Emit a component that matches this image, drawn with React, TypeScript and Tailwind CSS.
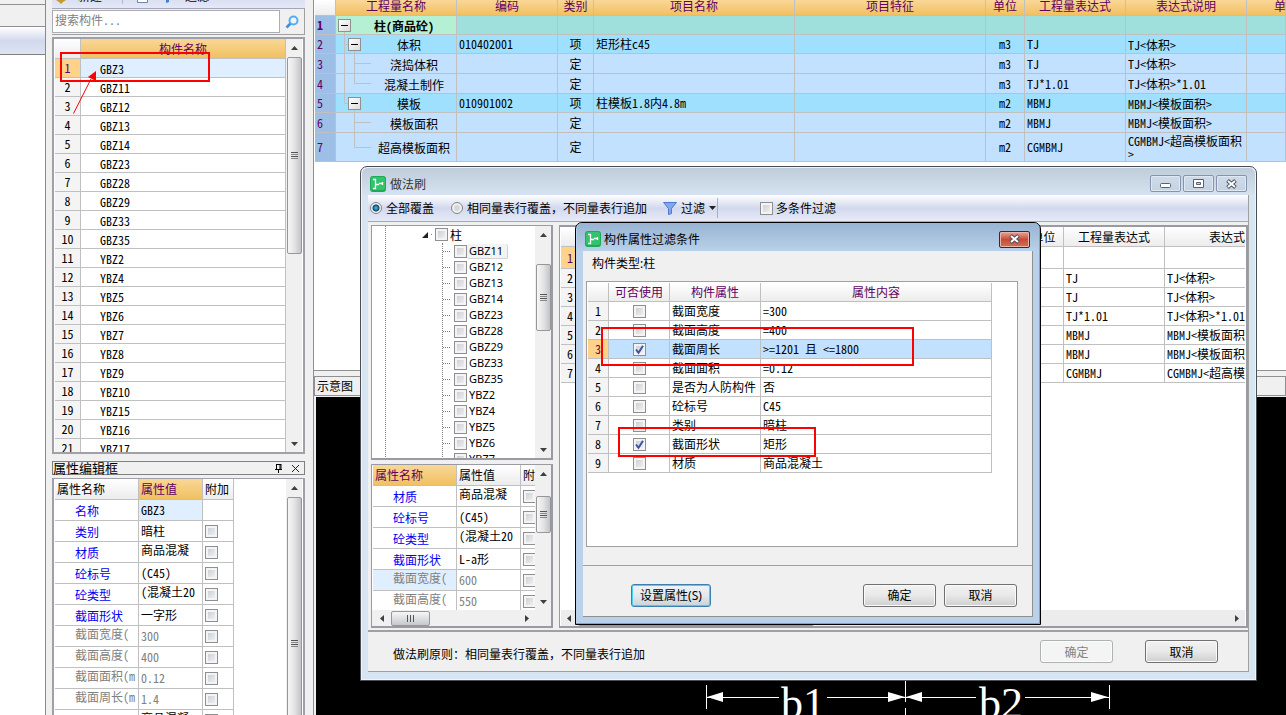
import type { ReactNode } from 'react';

const members = [
  'GBZ3', 'GBZ11', 'GBZ12', 'GBZ13', 'GBZ14', 'GBZ23', 'GBZ28', 'GBZ29', 'GBZ33', 'GBZ35', 'YBZ2',
  'YBZ4', 'YBZ5', 'YBZ6', 'YBZ7', 'YBZ8', 'YBZ9', 'YBZ10', 'YBZ15', 'YBZ16', 'YBZ17',
];

const treeItems = [
  'GBZ11', 'GBZ12', 'GBZ13', 'GBZ14', 'GBZ23', 'GBZ28', 'GBZ29', 'GBZ33', 'GBZ35',
  'YBZ2', 'YBZ4', 'YBZ5', 'YBZ6', 'YBZ7',
];

type Prop = { name: string; value: string; readOnly?: boolean; high?: boolean; selected?: boolean };

const editorProps: Prop[] = [
  { name: '类别', value: '暗柱' },
  { name: '材质', value: '商品混凝', high: true },
  { name: '砼标号', value: '(C45)' },
  { name: '砼类型', value: '(混凝土20', high: true },
  { name: '截面形状', value: '一字形' },
  { name: '截面宽度(', value: '300', readOnly: true },
  { name: '截面高度(', value: '400', readOnly: true },
  { name: '截面面积(m', value: '0.12', readOnly: true },
  { name: '截面周长(m', value: '1.4', readOnly: true },
  { name: '', value: '商品混凝', high: true },
];

const brushProps: Prop[] = [
  { name: '材质', value: '商品混凝', high: true },
  { name: '砼标号', value: '(C45)' },
  { name: '砼类型', value: '(混凝土20', high: true },
  { name: '截面形状', value: 'L-a形' },
  { name: '截面宽度(', value: '600', readOnly: true, selected: true },
  { name: '截面高度(', value: '550', readOnly: true },
];

type Quantity = {
  level: 0 | 1 | 2;
  name: string;
  code: string;
  kind: string;
  item: string;
  unit: string;
  expr: string;
  note: string;
  height: number;
  lines: string;
};

// lines: connector paths, x=8 is the root branch and x=18 the child branch
const quantities: Quantity[] = [
  { level: 0, name: '柱(商品砼)', code: '', kind: '', item: '', unit: '', expr: '', note: '', height: 19, lines: 'M8.5 15V19' },
  { level: 1, name: '体积', code: '010402001', kind: '项', item: '矩形柱c45', unit: 'm3', expr: 'TJ', note: 'TJ<体积>', height: 19, lines: 'M8.5 0V19M8 9.5H13M18.5 15V19' },
  { level: 2, name: '浇捣体积', code: '', kind: '定', item: '', unit: 'm3', expr: 'TJ', note: 'TJ<体积>', height: 20, lines: 'M8.5 0V20M18.5 0V20M18 9.5H35' },
  { level: 2, name: '混凝土制作', code: '', kind: '定', item: '', unit: 'm3', expr: 'TJ*1.01', note: 'TJ<体积>*1.01', height: 20, lines: 'M8.5 0V20M18.5 0V9.5H35' },
  { level: 1, name: '模板', code: '010901002', kind: '项', item: '柱模板1.8内4.8m', unit: 'm2', expr: 'MBMJ', note: 'MBMJ<模板面积>', height: 19, lines: 'M8.5 0V9.5H13M18.5 15V19' },
  { level: 2, name: '模板面积', code: '', kind: '定', item: '', unit: 'm2', expr: 'MBMJ', note: 'MBMJ<模板面积>', height: 20, lines: 'M18.5 0V20M18 9.5H35' },
  { level: 2, name: '超高模板面积', code: '', kind: '定', item: '', unit: 'm2', expr: 'CGMBMJ', note: 'CGMBMJ<超高模板面积>', height: 29, lines: 'M18.5 0V14.5H35' },
];

const conditions = [
  { name: '截面宽度', value: '=300', checked: false },
  { name: '截面高度', value: '=400', checked: false },
  { name: '截面周长', value: '>=1201 且 <=1800', checked: true },
  { name: '截面面积', value: '=0.12', checked: false },
  { name: '是否为人防构件', value: '否', checked: false },
  { name: '砼标号', value: 'C45', checked: false },
  { name: '类别', value: '暗柱', checked: false },
  { name: '截面形状', value: '矩形', checked: true },
  { name: '材质', value: '商品混凝土', checked: false },
];

const cell = 'border-r border-b border-[#c0c0c0] px-0.5 whitespace-pre overflow-hidden';
const head = 'border-r border-b border-[#c0c0c0] font-normal whitespace-nowrap overflow-hidden bg-linear-to-b from-white to-[#ececec]';
const goldHead = 'border-r border-b border-[#c0c0c0] font-normal whitespace-nowrap overflow-hidden bg-linear-to-b from-[#f9d797] to-[#f1c05f] text-[#600060]';

function Checkbox({ label, checked = false, id }: { label?: string; checked?: boolean; id?: string }) {
  return (
    <span className="relative block h-[13px] w-[13px] shrink-0">
      <input
        id={id}
        type="checkbox"
        aria-label={label}
        defaultChecked={checked}
        className="peer block h-[13px] w-[13px] appearance-none border border-[#8e8f8f] bg-linear-to-br from-[#c3c8cf] to-[#f8f8f8] shadow-[inset_0_0_0_2px_#f4f4f4]"
      />
      <svg className="pointer-events-none absolute inset-0 hidden peer-checked:block" width="13" height="13" viewBox="0 0 13 13">
        <path d="M3 6.5L5.5 9.8L10 2.8" fill="none" stroke="#3d56a0" strokeWidth="2" />
      </svg>
    </span>
  );
}

function Arrow({ dir }: { dir: 'up' | 'down' | 'left' | 'right' }) {
  const paths = { up: 'M1 6L4.5 2L8 6Z', down: 'M1 3L4.5 7L8 3Z', left: 'M6 1L2 4.5L6 8Z', right: 'M3 1L7 4.5L3 8Z' };
  return (
    <svg width="9" height="9" viewBox="0 0 9 9" className="shrink-0">
      <path d={paths[dir]} fill="#3f3f3f" />
    </svg>
  );
}

function VScroll({ before, thumb }: { before: string; thumb: string }) {
  return (
    <div className="flex w-4 shrink-0 flex-col items-center bg-[#f0f0f0]">
      <div className="flex h-[18px] shrink-0 items-center"><Arrow dir="up" /></div>
      <div className={before} />
      <div className={`flex w-[15px] shrink-0 flex-col items-center justify-center gap-px rounded-[2px] border border-[#979797] bg-linear-to-r from-[#f6f6f6] via-[#e4e4e6] to-[#c2c3c8] ${thumb}`}>
        <i className="h-px w-[7px] bg-[#555]" />
        <i className="h-px w-[7px] bg-[#888]" />
        <i className="h-px w-[7px] bg-[#555]" />
        <i className="h-px w-[7px] bg-[#888]" />
      </div>
      <div className="flex-1" />
      <div className="flex h-[18px] shrink-0 items-center"><Arrow dir="down" /></div>
    </div>
  );
}

function AppIcon() {
  return (
    <svg width="16" height="16" viewBox="0 0 16 16" className="shrink-0">
      <rect width="16" height="16" rx="3" fill="#1fa855" />
      <rect x="1" y="1" width="14" height="13" rx="2" fill="#30c46c" />
      <path d="M3 3.5H5.5V12.5H3M5.5 8.5H9M9 7.5H13M12.5 6V9" stroke="#fff" strokeWidth="1.3" fill="none" />
    </svg>
  );
}

function CloseGlyph() {
  return (
    <svg width="13" height="10" viewBox="0 0 13 10">
      <path d="M2.5 1.5L10.5 8.5M10.5 1.5L2.5 8.5" stroke="#4c4f5c" strokeWidth="3.8" />
      <path d="M3 2L10 8M10 2L3 8" stroke="#fff" strokeWidth="2" />
    </svg>
  );
}

function CaptionButton({ label, children }: { label: string; children: ReactNode }) {
  return (
    <button aria-label={label} className="flex h-[17px] w-[31px] items-center justify-center rounded-[2px] border border-[#8494ae] bg-linear-to-b from-[#cfdbe9] to-[#c3d3e4] shadow-[inset_0_0_0_1px_#e0e9f2]">
      {children}
    </button>
  );
}

function PushButton({ children, disabled, focused }: { children: ReactNode; disabled?: boolean; focused?: boolean }) {
  let look = 'w-[73px] border-[#707070] from-[#f3f3f3] via-[#e8e8e8] to-[#cfcfcf] shadow-[inset_0_0_0_1px_#fafafa]';
  if (disabled) look = 'w-[73px] border-[#adb2b5] text-[#838383] from-[#f4f4f4] to-[#f4f4f4] shadow-[inset_0_0_0_1px_#fcfcfc]';
  if (focused) look = 'w-[80px] border-[#3c7fb1] from-[#f0f3f5] via-[#e4e9ec] to-[#c9d3d9] shadow-[inset_0_0_0_1px_#45d2f5]';
  return (
    <button disabled={disabled} className={`h-[23px] rounded-[3px] border bg-linear-to-b text-center ${look}`}>
      {children}
    </button>
  );
}

function PropRow({ prop }: { prop: Prop }) {
  const nameColor = prop.readOnly ? 'text-[#808080] pb-1' : 'text-[#0000f0] pt-0.5';
  return (
    <tr className="h-[21px]">
      <td className={`${cell} ${prop.selected ? 'bg-[#e0efff]' : ''}`}>
        <div className={`pl-[18px] ${nameColor}`}>{prop.name}</div>
      </td>
      <td className={cell}>
        <div className={`${prop.readOnly ? 'text-[#808080]' : ''} ${prop.high ? 'pb-1' : ''}`}>{prop.value}</div>
      </td>
      <td className={cell}><Checkbox label={`附加 ${prop.name}`} /></td>
    </tr>
  );
}

function MemberPanel() {
  return (
    <section className="flex h-[454px] shrink-0 flex-col">
      <div className="flex h-[9px] shrink-0 gap-3 overflow-hidden border-b border-[#a3a7b5] bg-linear-to-b from-[#dbe0f2] to-[#e4e8f6] pl-1">
        <svg width="10" height="4" viewBox="0 0 10 4"><path d="M0 0H10L7 2L5 4L3 2Z" fill="#c79a2c" /></svg>
        <span className="-mt-[10px] leading-3">新建</span>
        <span className="ml-2 h-1 w-px bg-[#b4b8c8]" />
        <svg width="12" height="4" viewBox="0 0 12 4" className="ml-0.5"><path d="M.5 0V2.5H10.5V0" fill="#fff" stroke="#6d87ae" /></svg>
        <svg width="12" height="4" viewBox="0 0 12 4"><path d="M5 0H8V2L5 3Z" fill="#4878d0" /></svg>
        <span className="-mt-[10px] leading-3">过滤</span>
      </div>
      <div className="flex h-[26px] shrink-0 items-center border-r border-b border-[#a0a0a0]">
        <input
          aria-label="搜索构件"
          placeholder="搜索构件..."
          className="h-[23px] min-w-0 flex-1 border border-[#abadb3] bg-white px-0.5 pb-1 text-[12px] outline-none placeholder:text-[#808080]"
        />
        <button aria-label="搜索" className="flex w-6 justify-center">
          <svg width="14" height="14" viewBox="0 0 14 14">
            <path d="M5.5 8.5L1.5 12.5" stroke="#3c8fe0" strokeWidth="2.6" />
            <circle cx="8.5" cy="5.5" r="4" fill="#eaf6ff" stroke="#55aef0" strokeWidth="2" />
          </svg>
        </button>
      </div>
      <div className="mt-0.5 flex min-h-0 flex-1 overflow-hidden border-2 border-[#a0a0a8] bg-white px-px">
        <div className="min-w-0 flex-1 overflow-hidden">
          <table className="w-full table-fixed border-separate border-spacing-0">
            <colgroup><col className="w-[26px]" /><col /></colgroup>
            <thead>
              <tr className="h-[20px]">
                <th className={head} />
                <th className={goldHead}>构件名称</th>
              </tr>
            </thead>
            <tbody>
              {members.map((name, i) => (
                <tr key={name} className="h-[19px]">
                  <td className={`${cell} text-center ${i === 0 ? 'bg-[#ffd28a] text-[#600060]' : 'bg-[#f4f4f4]'}`}>{i + 1}</td>
                  <td className={`${cell} ${i === 0 ? 'bg-[#e0efff]' : ''}`}><div className="pt-0.5 pl-[17px]">{name}</div></td>
                </tr>
              ))}
            </tbody>
          </table>
        </div>
        <VScroll before="h-0" thumb="h-[197px]" />
      </div>
    </section>
  );
}

function PropertyPanel() {
  return (
    <section className="mt-[7px] flex min-h-0 flex-1 flex-col">
      <header className="flex h-[14px] shrink-0 items-center border border-[#808080] bg-[#f0f0f0]">
        <h2 className="flex-1 text-[13px]">属性编辑框</h2>
        <button aria-label="固定" className="mr-2">
          <svg width="9" height="10" viewBox="0 0 9 10"><path d="M2.5 1V6M2 1.5H7M6 1V6M7 1V6M1 6.5H8M4.5 7V10" stroke="#000" fill="none" /></svg>
        </button>
        <button aria-label="关闭" className="mr-1">
          <svg width="9" height="9" viewBox="0 0 9 9"><path d="M1 1L8 8M8 1L1 8" stroke="#222" /></svg>
        </button>
      </header>
      <div className="mt-[3px] flex min-h-0 flex-1 overflow-hidden border-x-2 border-t border-[#a0a0a8] bg-white px-px">
        <div className="min-w-0 flex-1 overflow-hidden">
          <table className="w-[179px] table-fixed border-separate border-spacing-0">
            <colgroup><col className="w-[84px]" /><col className="w-[64px]" /><col className="w-[31px]" /></colgroup>
            <thead>
              <tr className="h-[21px]">
                <th className={`${head} px-0.5 text-left`}>属性名称</th>
                <th className={`${goldHead} px-0.5 text-left`}>属性值</th>
                <th className={`${head} px-0.5 text-left`}>附加</th>
              </tr>
            </thead>
            <tbody>
              <tr className="h-[21px]">
                <td className={cell}><div className="pt-0.5 pl-[18px] text-[#0000f0]">名称</div></td>
                <td className={`${cell} bg-[#e0efff]`}>GBZ3</td>
                <td className={cell} />
              </tr>
              {editorProps.map((p) => <PropRow key={p.name} prop={p} />)}
            </tbody>
          </table>
        </div>
        <VScroll before="h-0" thumb="h-[292px]" />
      </div>
    </section>
  );
}

const rowColor = ['bg-[#9fe0dd]', 'bg-[#9fe0ff]', 'bg-[#c2e0ff]'];
const indent = ['pl-4', 'pl-[26px]', 'pl-9'];

function QuantityTable() {
  return (
    <table className="w-full table-fixed border-separate border-spacing-0">
      <colgroup>
        <col className="w-[21px]" /><col className="w-[121px]" /><col className="w-[101px]" /><col className="w-[36px]" />
        <col className="w-[201px]" /><col className="w-[191px]" /><col className="w-[39px]" /><col className="w-[101px]" />
        <col className="w-[121px]" /><col />
      </colgroup>
      <thead>
        <tr className="h-4">
          <th className={head} />
          {['工程量名称', '编码', '类别', '项目名称', '项目特征', '单位', '工程量表达式', '表达式说明', '单'].map((t, i) => (
            <th key={t} className={`${goldHead} pb-1 leading-[11px] ${i === 8 ? 'pl-[27px] text-left' : ''}`}>{t}</th>
          ))}
        </tr>
      </thead>
      <tbody>
        {quantities.map((q, i) => (
          <tr key={q.name} className={rowColor[q.level]} style={{ height: q.height }}>
            <td className={`${cell} bg-[#9dbfe6] text-[#600060] ${i === 0 ? 'font-bold' : ''}`}>{i + 1}</td>
            <td className={`border-r border-b border-[#c0c0c0] whitespace-nowrap ${i === 0 ? 'bg-[#b5f0d5] font-bold' : ''}`}>
              <div className="relative flex items-center" style={{ height: q.height - 1 }}>
                <svg width="36" height={q.height} className="absolute top-0 left-0">
                  <path d={q.lines} stroke="#c0c0c0" fill="none" />
                </svg>
                {q.level < 2 && (
                  <button
                    aria-label={`折叠 ${q.name}`}
                    className={`absolute top-[3px] flex h-[13px] w-[13px] items-center justify-center border border-[#909090] bg-linear-to-br from-white to-[#dcdcdc] ${q.level === 0 ? 'left-0.5' : 'left-3'}`}
                  >
                    <span className="h-px w-[7px] bg-black" />
                  </button>
                )}
                <span className={`flex-1 pt-0.5 text-center ${indent[q.level]}`}>{q.name}</span>
              </div>
            </td>
            <td className={cell}>{q.code}</td>
            <td className={`${cell} text-center`}>{q.kind}</td>
            <td className={cell}>{q.item}</td>
            <td className={cell} />
            <td className={`${cell} text-center`}>{q.unit}</td>
            <td className={cell}>{q.expr}</td>
            <td className="border-r border-b border-[#c0c0c0] pl-0.5 leading-[13px] break-all">{q.note}</td>
            <td className={cell} />
          </tr>
        ))}
      </tbody>
    </table>
  );
}

function Drawing() {
  return (
    <div className="ml-0.5 flex min-h-0 flex-1 items-end bg-black">
      <svg width="800" height="34" viewBox="316 681 800 34" className="shrink-0">
        <path d="M706.5 685V709M905.5 681V702M905.5 708V715M1109.5 685V709M707 697.5H779M827 697.5H976M1025 697.5H1109" stroke="#fff" />
        <path d="M707 697L723 692V702ZM905 697L888 692V702ZM906 697L922 692V702ZM1108 697L1091 692V702Z" fill="#fff" />
        <text x="781" y="718" className="fill-white font-['Liberation_Serif',serif] text-[44px]">b1</text>
        <text x="979" y="718" className="fill-white font-['Liberation_Serif',serif] text-[44px]">b2</text>
      </svg>
    </div>
  );
}

function MemberTree() {
  return (
    <div className="flex h-[235px] shrink-0 overflow-hidden border-2 border-t border-l border-[#9a9aa2] bg-white">
      <div className="min-w-0 flex-1 overflow-hidden">
        <div className="ml-[13px] border-l border-dotted border-[#808080]">
          <div className="flex h-[17px] items-center pl-[35px]">
            <svg width="8" height="8" viewBox="0 0 8 8"><path d="M7 1V7H1Z" fill="#222" /></svg>
            <span className="mx-0.5 h-px w-px bg-[#808080]" />
            <span className="ml-px"><Checkbox id="tree-root" /></span>
            <label htmlFor="tree-root" className="ml-0.5">柱</label>
          </div>
          <ul className="ml-[56px] border-l border-dotted border-[#808080]">
            {treeItems.map((name, i) => (
              <li key={name} className="flex h-4 items-center">
                <span className="mr-1 h-px w-[7px] border-t border-dotted border-[#808080]" />
                <Checkbox id={`tree-${name}`} />
                <label
                  htmlFor={`tree-${name}`}
                  className={`rounded-[2px] px-0.5 font-['Noto_Sans',sans-serif] text-[11px] leading-[14px] ${i === 0 ? 'border-r border-b border-[#d4d4d4] bg-[#f3f3f3] pr-1' : ''}`}
                >
                  {name}
                </label>
              </li>
            ))}
          </ul>
        </div>
      </div>
      <VScroll before="h-[20px] shrink-0" thumb="h-[67px]" />
    </div>
  );
}

function BrushProps() {
  return (
    <div className="mt-1 flex min-h-0 flex-1 flex-col overflow-hidden border-2 border-t border-l border-[#9a9aa2] bg-white">
      <div className="flex min-h-0 flex-1 pl-px">
        <div className="min-w-0 flex-1 overflow-hidden">
          <table className="w-[179px] table-fixed border-separate border-spacing-0">
            <colgroup><col className="w-[84px]" /><col className="w-[64px]" /><col className="w-[31px]" /></colgroup>
            <thead>
              <tr className="h-[21px]">
                <th className={`${goldHead} px-0.5 text-left`}>属性名称</th>
                <th className={`${head} px-0.5 text-left`}>属性值</th>
                <th className={`${head} px-0.5 text-left`}>附加</th>
              </tr>
            </thead>
            <tbody>{brushProps.map((p) => <PropRow key={p.name} prop={p} />)}</tbody>
          </table>
        </div>
        <VScroll before="h-[13px] shrink-0" thumb="h-[37px]" />
      </div>
      <div className="flex h-4 shrink-0 items-center bg-[#f0f0f0] pr-5 pl-1.5">
        <Arrow dir="left" />
        <div className="ml-1 flex h-[15px] w-[39px] items-center justify-center gap-0.5 rounded-[2px] border border-[#979797] bg-linear-to-b from-[#f6f6f6] to-[#c8c9cd]">
          <i className="h-[7px] w-px bg-[#555]" />
          <i className="h-[7px] w-px bg-[#555]" />
          <i className="h-[7px] w-px bg-[#555]" />
        </div>
        <div className="flex-1" />
        <Arrow dir="right" />
      </div>
    </div>
  );
}

function BrushTable() {
  return (
    <div className="flex min-w-0 flex-1 flex-col overflow-hidden border-2 border-l border-[#9a9aa2] bg-white px-px">
      <div className="min-h-0 flex-1 overflow-hidden">
        <table className="w-full table-fixed border-separate border-spacing-0">
          <colgroup><col className="w-[20px]" /><col /><col className="w-[40px]" /><col className="w-[101px]" /><col className="w-[80px]" /></colgroup>
          <thead>
            <tr className="h-[20px]">
              <th className={head} />
              <th className={head} />
              <th className={head}>单位</th>
              <th className={head}>工程量表达式</th>
              <th className={`${head} border-r-0 text-right`}>表达式</th>
            </tr>
          </thead>
          <tbody>
            {quantities.map((q, i) => (
              <tr key={q.name} style={{ height: i === 0 ? 22 : 19 }}>
                <td className={`${cell} ${i === 0 ? 'bg-[#ffd28a] text-[#600060]' : 'bg-[#f4f4f4]'}`}><div className="pl-1">{i + 1}</div></td>
                <td className={cell} />
                <td className={cell} />
                <td className={cell}>{q.expr}</td>
                <td className={`${cell} border-r-0`}>{q.note}</td>
              </tr>
            ))}
          </tbody>
        </table>
      </div>
      <div className="flex h-4 shrink-0 items-center bg-[#ececec] px-1">
        <Arrow dir="left" />
        <div className="ml-1 h-[15px] w-[236px] rounded-[2px] border border-[#979797] bg-linear-to-b from-[#f6f6f6] to-[#c8c9cd]" />
        <div className="flex-1" />
        <Arrow dir="right" />
      </div>
    </div>
  );
}

function RadioOption({ id, label, checked }: { id: string; label: string; checked?: boolean }) {
  return (
    <div className="flex items-center gap-1">
      <input
        type="radio"
        name="cover"
        id={id}
        defaultChecked={checked}
        className="h-3 w-3 appearance-none rounded-full border border-[#808488] bg-[radial-gradient(circle,#d4d8dc_30%,#f4f4f4_60%)] checked:bg-[radial-gradient(circle,#2fa8d8_15%,#10385c_45%,#f4f4f4_55%)]"
      />
      <label htmlFor={id} className="whitespace-nowrap">{label}</label>
    </div>
  );
}

function BrushDialog() {
  return (
    <div
      role="dialog"
      aria-label="做法刷"
      className="absolute top-[166px] left-[360px] flex h-[515px] w-[897px] flex-col rounded-t-[7px] border border-[#4a4e54] bg-[#d7e4f1] px-[7px] pb-2 shadow-[inset_0_0_0_1px_#eef4fa]"
    >
      <header className="-mx-1.5 mt-px flex h-[27px] shrink-0 items-center rounded-t-[6px] bg-linear-to-b from-[#bfcddb] to-[#d5e2ef] px-2 pt-1">
        <AppIcon />
        <h1 className="ml-1 flex-1 text-[#333]">做法刷</h1>
        <div className="flex gap-0.5">
          <CaptionButton label="最小化">
            <svg width="11" height="9" viewBox="0 0 11 9"><rect x=".5" y="4.5" width="10" height="4" rx="1" fill="#fff" stroke="#5a6070" /></svg>
          </CaptionButton>
          <CaptionButton label="最大化">
            <svg width="11" height="9" viewBox="0 0 11 9"><path d="M.5 .5H10.5V8.5H.5Z" fill="#fff" stroke="#5a6070" /><path d="M3.5 3.5H7.5V5.5H3.5Z" fill="#c8d4e2" stroke="#5a6070" /></svg>
          </CaptionButton>
          <CaptionButton label="关闭"><CloseGlyph /></CaptionButton>
        </div>
      </header>
      <div className="flex min-h-0 flex-1 flex-col border-r border-b border-[#a0a0a0] bg-[#f0f0f0]">
        <div className="flex h-[27px] shrink-0 items-center border-b border-[#a4a8c0] bg-linear-to-b from-white via-[#d3d9ed] to-[#e6eaf8] pl-0.5">
          <RadioOption id="cover-all" label="全部覆盖" checked />
          <div className="ml-[17px]"><RadioOption id="cover-same" label="相同量表行覆盖，不同量表行追加" /></div>
          <button className="ml-4 flex items-center gap-1">
            <svg width="14" height="13" viewBox="0 0 14 13"><path d="M.5 .5H13.5L8.5 6.5V11.5L5.5 12.5V6.5Z" fill="#7fa8ee" stroke="#5078cc" /></svg>
            <span>过滤</span>
            <svg width="7" height="4" viewBox="0 0 7 4"><path d="M0 0H7L3.5 4Z" fill="#222" /></svg>
          </button>
          <span className="ml-px h-5 w-px bg-[#a8aec4]" />
          <span className="ml-[42px]"><Checkbox id="multi" /></span>
          <label htmlFor="multi" className="ml-[3px]">多条件过滤</label>
        </div>
        <div className="flex min-h-0 flex-1 gap-1.5 pt-[3px] pb-0.5 pl-[3px]">
          <div className="flex w-[182px] shrink-0 flex-col">
            <MemberTree />
            <BrushProps />
          </div>
          <BrushTable />
        </div>
        <footer className="flex h-[41px] shrink-0 items-center border-t-2 border-[#a0a0a0] pr-[30px] pl-[25px]">
          <p className="flex-1 pt-1">做法刷原则：相同量表行覆盖，不同量表行追加</p>
          <div className="flex gap-8">
            <PushButton disabled>确定</PushButton>
            <PushButton>取消</PushButton>
          </div>
        </footer>
      </div>
    </div>
  );
}

function FilterDialog() {
  return (
    <div
      role="dialog"
      aria-label="构件属性过滤条件"
      className="absolute top-[222px] left-[575px] flex h-[403px] w-[466px] flex-col rounded-t-[7px] border border-black bg-[#b9d1ea] px-[7px] pb-[7px] shadow-[inset_-1px_-1px_0_#35c4e0]"
    >
      <header className="-mx-[6px] flex h-7 shrink-0 items-center rounded-t-[6px] bg-linear-to-b from-[#98b4d2] to-[#b9d1ea] pr-[9px] pl-2 pt-1">
        <AppIcon />
        <h1 className="ml-[3px] flex-1">构件属性过滤条件</h1>
        <button aria-label="关闭" className="flex h-[17px] w-[31px] items-center justify-center rounded-[2px] border border-[#5a1c1c] bg-linear-to-b from-[#e5a596] via-[#c84a36] to-[#d0705c] shadow-[inset_0_0_0_1px_#eab5a8]">
          <CloseGlyph />
        </button>
      </header>
      <div className="flex min-h-0 flex-1 flex-col border-r border-b border-[#909090] bg-[#f0f0f0]">
        <p className="pt-1 pl-[9px] leading-4">构件类型<span className="font-['Noto_Sans',sans-serif]">:</span>柱</p>
        <div className="mt-[9px] mr-[14px] ml-[3px] h-[266px] shrink-0 border border-[#a0a0a0] bg-white p-px pr-[25px]">
          <table className="w-full table-fixed border-separate border-spacing-0">
            <colgroup><col className="w-[21px]" /><col className="w-[61px]" /><col className="w-[91px]" /><col /></colgroup>
            <thead>
              <tr className="h-[19px] text-[#600060]">
                <th className={head} />
                <th className={head}>可否使用</th>
                <th className={head}>构件属性</th>
                <th className={head}>属性内容</th>
              </tr>
            </thead>
            <tbody>
              {conditions.map((c, i) => (
                <tr key={c.name} className={`h-[19px] ${i === 2 ? 'bg-[#c2e0ff]' : ''}`}>
                  <td className={`${cell} text-center ${i === 2 ? 'bg-[#ffd28a] text-[#600060]' : 'bg-[#f4f4f4]'}`}>{i + 1}</td>
                  <td className={cell}><div className="flex justify-center"><Checkbox label={c.name} checked={c.checked} /></div></td>
                  <td className={cell}>{c.name}</td>
                  <td className={cell}>{c.value}</td>
                </tr>
              ))}
            </tbody>
          </table>
        </div>
        <footer className="mt-[18px] flex flex-1 items-center gap-2 border-t border-[#a0a0a0] pt-2 pr-[15px] pl-[48px]">
          <PushButton focused>设置属性<span className="font-['Noto_Sans',sans-serif]">(S)</span></PushButton>
          <div className="flex-1" />
          <PushButton>确定</PushButton>
          <PushButton>取消</PushButton>
        </footer>
      </div>
    </div>
  );
}

export default function App() {
  return (
    <div className="relative flex h-screen w-full overflow-hidden bg-[#f0f0f0] font-['Noto_Sans_Mono_CJK_SC','Noto_Sans_CJK_SC',sans-serif] text-[12px] leading-[14px] text-black">
      <aside className="flex w-[46px] shrink-0 flex-col border-r border-[#868a90]">
        <div className="h-[5px] border-b border-[#909090]" />
        <div className="h-[22px] border-b border-[#909090]" />
        <div className="h-7 border-b border-[#808080] bg-linear-to-b from-white via-[#d3d9ed] to-[#dde3f4]" />
        <div className="flex-1 bg-white" />
      </aside>

      <div className="flex w-[267px] shrink-0 flex-col pr-2 pl-[6px]">
        <MemberPanel />
        <PropertyPanel />
      </div>

      <main className="flex min-w-0 flex-1 flex-col border-l border-[#909090]">
        <div className="flex h-[371px] shrink-0 flex-col border-b border-[#909090] bg-white pl-px">
          <QuantityTable />
        </div>
        <header className="mt-[5px] mb-px flex h-5 shrink-0 items-center border border-[#909090]">
          <h2 className="pl-0.5">示意图</h2>
        </header>
        <Drawing />
      </main>

      <BrushDialog />
      <FilterDialog />

      {/* review marks */}
      <div className="absolute top-[52px] left-[60px] h-[30px] w-[150px] border-2 border-[#f00]" />
      <div className="absolute top-[327px] left-[601px] h-[39px] w-[313px] border-2 border-[#f00]" />
      <div className="absolute top-[427px] left-[618px] h-[30px] w-[198px] border-2 border-[#f00]" />
      <svg width="24" height="43" viewBox="0 0 24 43" className="absolute top-[71px] left-[73px]">
        <path d="M.5 42.5L18 8" stroke="#f00" />
        <path d="M23 0L15 6L23 10Z" fill="#f00" />
      </svg>
    </div>
  );
}
